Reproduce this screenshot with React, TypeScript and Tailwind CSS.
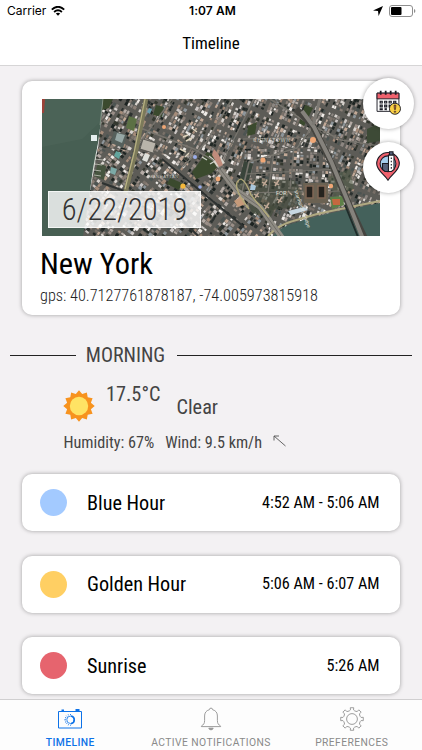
import type { ReactNode } from 'react'

interface Block {
  x: number
  y: number
  w: number
  h: number
  fill: string
}

interface ScheduleItem {
  name: string
  time: string
  dot: string
}

const SCHEDULE: ScheduleItem[] = [
  { name: 'Blue Hour', time: '4:52 AM - 5:06 AM', dot: 'bg-[#a3caff]' },
  { name: 'Golden Hour', time: '5:06 AM - 6:07 AM', dot: 'bg-[#ffcf63]' },
  { name: 'Sunrise', time: '5:26 AM', dot: 'bg-[#e6646e]' },
]

const ROOFS = ['#d8d3ce', '#b5aca6', '#9b8f88', '#8d8782', '#5d5b57', '#c2a997', '#8e969b', '#4c5452', '#a58c7a', '#f0ece8', '#7b726a', '#cbc6c4', '#8a7f76']
const SHADES = ['#222926', '#2d3230', '#1c2321', '#34382f']

// small seeded generator, so the map always draws the same city
function createRandom(seed: number) {
  let s = seed
  return () => {
    s = (s * 16807) % 2147483647
    return s / 2147483647
  }
}

function buildDistrict(seed: number, stepX: number, stepY: number): Block[] {
  const rand = createRandom(seed)
  const blocks: Block[] = []
  for (let x = -220; x < 220; x += stepX) {
    for (let y = -220; y < 220; y += stepY) {
      // leave gaps for the streets
      if (Math.round((x + 220) / stepX) % 5 === 4 || Math.round((y + 220) / stepY) % 8 === 7) {
        rand()
        continue
      }
      const roofs = rand() < 0.25 ? SHADES : ROOFS
      blocks.push({
        x: x + rand() * 0.8,
        y: y + rand() * 0.8,
        w: stepX * (0.5 + rand() * 0.6),
        h: stepY * (0.5 + rand() * 0.65),
        fill: roofs[Math.floor(rand() * roofs.length)],
      })
    }
  }
  return blocks
}

const DISTRICTS = [
  { id: 'east', angle: 24, clip: 'M140 0H338V137H140Z', blocks: buildDistrict(77, 2.9, 3.8) },
  { id: 'west', angle: 30, clip: 'M61 0H180L144 60L56 50Z', blocks: buildDistrict(1234, 3.2, 3.8) },
  { id: 'south', angle: 38, clip: 'M56 48L150 58L180 70L232 137H40Z', blocks: buildDistrict(4321, 3.7, 3.4) },
  { id: 'village', angle: 4, clip: 'M203 50L276 48L302 92L200 92Z', blocks: buildDistrict(909, 3.3, 3) },
]

function SatelliteMap() {
  return (
    <svg viewBox="0 0 338 137" className="block h-[137px] w-[338px]">
      {DISTRICTS.map(d => (
        <g key={d.id}>
          <clipPath id={d.id}><path d={d.clip} /></clipPath>
          <g clipPath={`url(#${d.id})`}>
            <rect width="338" height="137" fill="#5d5c57" />
            <g transform={`translate(170 68) rotate(${d.angle})`}>
              {d.blocks.map((b, i) => (
                <rect key={i} x={b.x} y={b.y} width={b.w} height={b.h} fill={b.fill} />
              ))}
            </g>
          </g>
        </g>
      ))}

      {/* parks */}
      <g fill="#3b4a2e">
        <path d="M61 0h10l-4 9-7 2zM114 6l8 2-2 10-9-2z" />
        <path d="M87 17l8 3-3 12-8-3z" fill="#5b7044" />
        <path d="M165 53l8 3 4 10-7 8-16 6-4-7z" />
        <path d="M128 79l12 5-3 7-12-6z" />
        <path d="M206 27l9-4-2 12-8 2zM263 6l8 3-9 18-5-3z" />
        <path d="M325 30l13-6v18l-13 2z" fill="#3d4a36" />
        <path d="M56 64l8 3-2 14-10-4z" fill="#46543f" />
        <path d="M192 84l12 0-2 10-8 2zM206 104l28 3-6 13-18-6z" fill="#454d3d" opacity=".7" />
        <path d="M212 80l40 1 8 12-2 14-40 6-8-14z" fill="#454b3c" opacity=".6" />
        <path d="M286 78l22-8 4 20-20 8z" fill="#515c48" opacity=".6" />
        <path d="M202 62l9 3-4 16-11 5z" fill="#39443a" />
      </g>

      {/* housing blocks */}
      <g fill="none" stroke="#c3aa97" strokeWidth="1.4">
        <path d="M208 83l5 4M213 82l-4 6M220 83l5 3M225 81l-4 6M232 83l5 3M237 81l-4 6" />
        <path d="M212 95l5 3M217 93l-4 6M235 100l5 3M240 98l-4 6M246 92l4 4M222 106l5 3M227 104l-4 6" />
        <path d="M141 38l5-2M144 42l6-3M138 50l6 3M143 58l4-4M151 30l4 3" stroke="#ded4bd" />
        <path d="M160 58l5 3M167 57l5 4M168 65l5-3" stroke="#cfd2ca" />
      </g>

      {/* avenues */}
      <g fill="none" stroke="#77746d">
        <path d="M190 0l-25 42-24 26M228 0l43 27-16 22-48 14-7 30" strokeWidth="1.6" />
        <path d="M96 28l56 22 30 18M130 0L96 46M212 0l-46 92M271 27l28 14 39 6" strokeWidth="1.4" />
        <path d="M201 40l72-2M205 75l92-5M200 94l102-2M232 52l-6 42M252 48l-4 42" strokeWidth="1.2" />
        <path d="M84 92l48 20 24 25M120 60l82 68M60 84l28 10" stroke="#2e3231" strokeWidth="2" />
      </g>
      <path d="M104 0L94 52 83 95" fill="none" stroke="#7c7a5a" strokeWidth="4.5" />
      <path d="M103 0L92 54 83 90" fill="none" stroke="#b9b384" strokeWidth="1.2" />

      {/* towers and courts */}
      <g fill="#b9b4aa">
        <path d="M101 40l13 4-3 10-13-4z" stroke="#4c4b47" strokeWidth=".8" />
        <path d="M72 32l13 4-4 13-12-5z" fill="#56605c" />
        <path d="M75 34l8 2-3 8-7-3z" fill="#97a8a6" />
        <path d="M103 54l5 2-3 7-5-2z" fill="#dfe1dc" />
        <path d="M171 62l8-4 4 6-8 4z" fill="#d8d4ca" />
        <path d="M74 52l5 2-2 6-5-3z" fill="#62a59d" />
        <path d="M69 68l6 2-2 6-5-2z" fill="#7ca9a6" />
        <path d="M172 50l5 6 4 10-4 2-7-12z" fill="#c08c7c" />
        <path d="M192 102l8-5 4 8-8 3z" fill="#c69a7a" />
        <path d="M209 85l5 2-1 4-5 0z" fill="#a9c7dd" />
        <path d="M107 9l3 1-2 5-3-2z" fill="#6aa0b0" />
      </g>
      <path d="M261 84h25v20h-24z" fill="#6b6253" />
      <path d="M264 87h7v12h-7zM276 87h7v12h-7z" fill="#26231f" stroke="#806755" strokeWidth="1.5" />
      <path d="M288 98l13-1 1 9-12 4z" fill="#5d8048" />
      <path d="M290 100h8v6h-7z" fill="#c4683f" />

      {/* Hudson */}
      <path d="M0 0H61L59 22 56 44 51 70 48 92 41 137H0Z" fill="#475f53" />
      <path d="M0 0H61L59 22 40 40 0 48Z" fill="#4f675c" opacity=".5" />
      <path d="M0 0h3l-1 14H0z" fill="#9c4238" />
      <path d="M61 0l-3 26M54 54l-3 18" fill="none" stroke="#aeb9a9" strokeWidth=".5" />
      <path d="M53 60l8 1M53 65l7 1M52 71l7 1M52 76l7 1" stroke="#c4c5bd" strokeWidth=".8" />
      <rect x="49" y="36" width="6" height="6" fill="#e6efef" />

      {/* East River */}
      <path d="M231 137Q238 128 252 124L276 117 308 110 338 104V137Z" fill="#44615b" />
      <path d="M226 137Q236 126 251 122L275 115 308 108 338 102" fill="none" stroke="#b0a981" strokeWidth="2.2" />
      <path d="M246 112l16-4 4 3-17 5z" fill="#c8d8e2" />

      {/* Manhattan bridge */}
      <path d="M254 10L271 27 289 63 307 106 323 140" fill="none" stroke="#45443f" strokeWidth="6.5" />
      <path d="M260 12L272 28 289 62 307 105 321 140" fill="none" stroke="#85827c" strokeWidth="4" />
      <path d="M278 0L271 26" stroke="#7c7973" strokeWidth="3" />
      <path d="M303 106l13 32" stroke="#1f2b29" strokeWidth="1.8" />

      {/* Brooklyn bridge ramps */}
      <path d="M178 70L194 91 218 108 241 140" fill="none" stroke="#8f8c84" strokeWidth="5.5" />
      <path d="M178 70L194 91 218 108 241 140" fill="none" stroke="#6f6c66" strokeWidth="1" />
      <path d="M207 110Q187 84 199 80Q204 82 209 96L227 118" fill="none" stroke="#b2aa78" strokeWidth="1.3" />

      {/* place labels */}
      <g fill="#e2e2de" className="font-['Liberation_Sans']" fontSize="5">
        <text x="211" y="43" letterSpacing=".8" opacity=".75">CHINATOWN</text>
        <text x="234" y="96">FOR</text>
        <text x="107" y="79" fontSize="4" letterSpacing=".6" opacity=".7">MANHATTAN</text>
        <text x="252" y="92" transform="rotate(70 252 92)">Manhattan Bridge</text>
      </g>
      <g fill="#f0a775">
        <circle cx="271" cy="41" r="3" />
        <circle cx="221" cy="61" r="2.6" />
        <circle cx="176" cy="80" r="2.4" />
        <circle cx="289" cy="87" r="2.2" />
        <circle cx="122" cy="28" r="2" />
        <circle cx="141" cy="87" r="2.6" fill="#f4b83c" />
        <circle cx="153" cy="58" r="2" fill="#9badea" />
        <circle cx="158" cy="88" r="1.8" fill="#9badea" />
      </g>
    </svg>
  )
}

function StatusBar() {
  return (
    <div className="flex h-[22px] items-center px-[7px] font-[Inter] text-black">
      <div className="flex flex-1 items-center gap-[5px]">
        <span className="text-[12px]">Carrier</span>
        <svg viewBox="0 0 14 10" className="h-[10px] w-[14px]" fill="none" stroke="#000" strokeWidth="1.9">
          <path d="M.8 3.6Q7-2 13.2 3.6" />
          <path d="M3.1 6Q7 2.7 10.9 6" />
          <path d="M7 9.8L4.8 7.6Q7 5.9 9.2 7.6Z" fill="#000" stroke="none" />
        </svg>
      </div>
      <span className="ml-[3px] text-[12px] font-semibold tracking-[0.1px]">1:07 AM</span>
      <div className="flex flex-1 items-center justify-end gap-[6px]">
        <svg viewBox="0 0 10 10" className="h-[10px] w-[10px]">
          <path d="M10 0L5.6 10 5 5 0 4.4Z" fill="#000" />
        </svg>
        <svg viewBox="0 0 27 12" className="-mr-[1px] h-[12px] w-[27px]">
          <rect x=".5" y=".5" width="23" height="11" rx="2.5" fill="#fff" stroke="#8e8e8e" />
          <rect x="2" y="2" width="10.5" height="8" rx="1" fill="#000" />
          <path d="M25 4v4q1.4-.6 1.4-2T25 4z" fill="#8e8e8e" />
        </svg>
      </div>
    </div>
  )
}

function CalendarIcon() {
  return (
    <svg viewBox="0 0 24 24" className="h-[25px] w-[25px]" stroke="#1b1b24" strokeWidth=".9">
      <path d="M1 3h21v17.5H1z" fill="#fff" />
      <path d="M1 3h21v5.5H1z" fill="#f0616d" />
      <path d="M4.5.8v3.8M9.3.8v3.8M14.1.8v3.8M18.9.8v3.8" strokeWidth="1.7" />
      <g fill="#fff" strokeWidth="1.1">
        <path d="M4 10.8h2v1.7H4zM8.3 10.8h2v1.7h-2zM12.6 10.8h2v1.7h-2zM17 10.8h2v1.7h-2z" />
        <path d="M4 14.5h2v1.7H4zM8.3 14.5h2v1.7h-2zM12.6 14.5h.8v1.7h-.8z" />
        <path d="M4 18h2v.8H4zM8.3 17.6l2 1.6M10.3 17.6l-2 1.6" />
      </g>
      <circle cx="18.2" cy="18" r="5.3" fill="#f9cf45" />
      <path d="M17.3 14.5h1.8l-.4 4.2h-1z" fill="#d9702f" strokeWidth=".6" />
      <circle cx="18.2" cy="20.8" r=".7" fill="#d9702f" strokeWidth=".6" />
    </svg>
  )
}

function CityPinIcon() {
  return (
    <svg viewBox="0 0 24 30" className="h-[30px] w-[24px]" stroke="#1b1b24" strokeWidth="1.1">
      <path d="M12 29.2C8.5 23.5.7 19.5.7 12.8a11.3 11.3 0 0 1 22.6 0C23.3 19.5 15.5 23.5 12 29.2Z" fill="#f0616d" />
      <circle cx="12" cy="12.8" r="7.9" fill="#a5cdec" />
      <path d="M6.5 12.5H12.5V20.5H9L6.5 18.5Z" fill="#56627b" />
      <path d="M12.5 4H18v14.5l-2.5 2h-3z" fill="#fff" />
      <path d="M13.5.8H17V4h-3.5z" fill="#56627b" />
      <path d="M15.3 6.5v12" strokeDasharray="1.6 1.6" />
    </svg>
  )
}

function RoundButton({ label, children }: { label: string; children: ReactNode }) {
  return (
    <button
      aria-label={label}
      className="flex h-[51px] w-[51px] items-center justify-center rounded-full bg-white pb-[2px] shadow-[0_0_4px_rgba(0,0,0,0.35)]"
    >
      {children}
    </button>
  )
}

function LocationCard() {
  return (
    <section className="relative mx-[22px] mt-[15px] h-[234px] rounded-[10px] bg-white px-[20px] pt-[18px] shadow-[0_0_4px_rgba(0,0,0,0.35)]">
      <div className="relative -mr-px">
        <SatelliteMap />
        <div className="absolute top-[92px] left-[6px] flex h-[37px] w-[153px] items-center justify-center border border-white/70 bg-white/80 pt-[2px] text-[30.5px] leading-none font-light text-[#333]">
          6/22/2019
        </div>
      </div>
      <h1 className="mt-[10px] -ml-[2px] text-[30.4px] leading-[36px] text-black">New York</h1>
      <p className="-ml-[2px] text-[16.25px] leading-[27px] font-light text-[#222]">
        gps: 40.7127761878187, -74.005973815918
      </p>
      <div className="absolute -top-[3px] -right-[13.5px] flex flex-col gap-[12.5px]">
        <RoundButton label="Pick date"><CalendarIcon /></RoundButton>
        <RoundButton label="Pick location"><CityPinIcon /></RoundButton>
      </div>
    </section>
  )
}

function SunIcon() {
  const points = Array.from({ length: 24 }, (_, i) => {
    const r = i % 2 === 0 ? 15.7 : 12.3
    const a = (i * Math.PI) / 12
    return `${(16 + r * Math.sin(a)).toFixed(2)},${(16 - r * Math.cos(a)).toFixed(2)}`
  }).join(' ')

  return (
    <svg viewBox="0 0 32 32" className="mt-[6px] h-[32px] w-[32px]">
      <polygon points={points} fill="#f7931e" />
      <circle cx="16" cy="16" r="9.2" fill="#ffe364" />
    </svg>
  )
}

function Weather() {
  return (
    <div className="text-[#444]">
      <div className="mt-[26px] flex items-center px-[10px]">
        <span className="h-px w-[66px] bg-[#222]" />
        <h2 className="mr-[11px] ml-[9px] w-[81px] pt-px text-center text-[20px] leading-[27px]">MORNING</h2>
        <span className="h-px flex-1 bg-[#222]" />
      </div>
      <div className="mt-[15px] flex h-[47px] items-start pl-[63px]">
        <SunIcon />
        <span className="ml-[11px] text-[20.3px] leading-[20px]">17.5°C</span>
        <span className="mt-[13px] ml-[16px] text-[20.3px] leading-[20px]">Clear</span>
      </div>
      <div className="flex items-center pl-[63.5px] text-[16.2px] leading-[24px]">
        <span>Humidity: 67%</span>
        <span className="ml-[11px]">Wind: 9.5 km/h</span>
        <svg viewBox="0 0 13 12" className="-mt-[5px] ml-[11px] h-[12px] w-[13px]" fill="none" stroke="#555" strokeWidth=".9">
          <path d="M12.5 11L1 1M1 5.5V1h5" />
        </svg>
      </div>
    </div>
  )
}

function ScheduleCard({ item }: { item: ScheduleItem }) {
  return (
    <li className="flex h-[57px] items-center rounded-[10px] bg-white pr-[20.5px] pl-[18px] text-black shadow-[0_0_4px_rgba(0,0,0,0.35)]">
      <span className={`h-[27px] w-[27px] rounded-full ${item.dot}`} />
      <span className="ml-[20px] flex-1 text-[20.2px] leading-[24px]">{item.name}</span>
      <span className="pt-px text-[16.2px]">{item.time}</span>
    </li>
  )
}

function CameraIcon() {
  return (
    <svg viewBox="0 0 24 20" className="h-[20px] w-[24px]" fill="none" stroke="#0d72e8">
      <path d="M.5 2.5h23V19H.5z" />
      <path d="M3.5 1.5H6M17.5 1h4" strokeWidth="1.8" />
      <circle cx="12.5" cy="10.8" r="3.7" strokeWidth=".8" />
      <path d="M13 7a3.9 3.9 0 0 1 0 7.700" strokeWidth="1.6" />
      <path d="M12.500 5V6M8.300 6.700l.8.800M6.300 10.800h1.700M8.300 15l.8-.8M12.500 16.700v-1M7 8.500l1.300.500M7 13.200l1.300-.500M10.200 5.400l.4 1M10.200 16.300l.4-1" strokeWidth=".9" />
    </svg>
  )
}

function BellIcon() {
  return (
    <svg viewBox="0 0 24 24" className="h-[24px] w-[24px]" fill="none" stroke="#929292" strokeWidth=".9">
      <path d="M10.4 2.7a1.6 1.6 0 0 1 3.2 0C17 3.5 18.4 6 18.4 9v4.5c0 3 1 4.2 3.2 5.5v.6H2.4V19c2.2-1.3 3.2-2.5 3.2-5.5V9c0-3 1.4-5.5 4.8-6.3z" />
      <path d="M9.8 21.2a2.3 2.3 0 0 0 4.4 0z" fill="#929292" />
    </svg>
  )
}

function GearIcon() {
  // eight teeth, each with a flat rim
  const d = Array.from({ length: 8 }, (_, i) => {
    const c = (i * Math.PI) / 4
    return [[-0.3, 8.6], [-0.17, 9.2], [-0.15, 11.4], [0.15, 11.4], [0.17, 9.2], [0.3, 8.6]]
      .map(([o, r]) => `${(12 + r * Math.sin(c + o)).toFixed(2)} ${(12 - r * Math.cos(c + o)).toFixed(2)}`)
      .join('L')
  }).join('L')

  return (
    <svg viewBox="0 0 24 24" className="h-[24px] w-[24px]" fill="none" stroke="#929292" strokeWidth=".9" strokeLinejoin="round">
      <path d={`M${d}Z`} />
      <circle cx="12" cy="12" r="5.4" />
    </svg>
  )
}

function Tab({ label, active = false, children }: { label: string; active?: boolean; children: ReactNode }) {
  return (
    <button className={`flex flex-1 flex-col items-center pt-[7px] ${active ? 'font-medium text-[#0d72e8]' : 'text-[#8a8a8a]'}`}>
      <span className="flex h-[24px] items-center">{children}</span>
      <span className="mt-[6px] font-[Roboto] text-[10.3px] leading-[12px] tracking-[0.42px] whitespace-nowrap">
        {label}
      </span>
    </button>
  )
}

export default function App() {
  return (
    <div className="flex h-[750px] w-[422px] flex-col overflow-hidden bg-[#f3f1f3] font-['Roboto_Condensed',Roboto,sans-serif]">
      <header className="h-[66px] shrink-0 border-b border-[#d6d5d6] bg-white">
        <StatusBar />
        <div className="flex h-[43px] items-center justify-center text-[17px] text-black">Timeline</div>
      </header>

      <main className="min-h-0 flex-1 overflow-hidden">
        <LocationCard />
        <Weather />
        <ul className="mx-[22px] mt-[19px] flex flex-col gap-[24.5px]">
          {SCHEDULE.map(item => (
            <ScheduleCard key={item.name} item={item} />
          ))}
        </ul>
      </main>

      <nav className="flex h-[51px] shrink-0 border-t border-[#d0cfd0] bg-[#fdfdfd]">
        <Tab label="TIMELINE" active><CameraIcon /></Tab>
        <Tab label="ACTIVE NOTIFICATIONS"><BellIcon /></Tab>
        <Tab label="PREFERENCES"><GearIcon /></Tab>
      </nav>
    </div>
  )
}
